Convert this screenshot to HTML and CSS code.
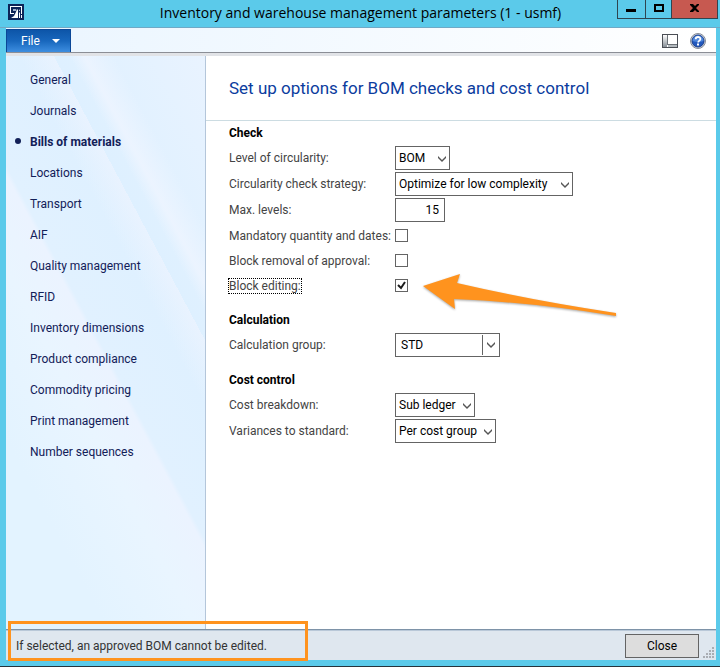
FILE: index.html
```html
<!DOCTYPE html>
<html lang="en">
<head>
    <meta charset="UTF-8">
    <meta name="viewport" content="width=device-width, initial-scale=1.0">
    <title>Inventory and warehouse management parameters (1 - usmf)</title>
    <link rel="stylesheet" href="styles.css">
</head>
<body>
    <div class="window">
        <header class="title-bar">
            <svg class="app-icon" width="16" height="16" viewBox="0 0 16 16" aria-hidden="true">
                <rect width="16" height="16" fill="#0d2457"/>
                <path d="M2 2h12v8h-1V3H3v6h3v1H2z" fill="#fff"/>
                <path d="M3 14l3-2 2-4 1-3 1 1v8zM11 7l1-2v2zM11 9l1-1v6h-1zM13 11h1v3h-1z" fill="#fff"/>
                <path d="M5 5h3v2H5z" fill="#9fb0cc"/>
            </svg>
            <div class="window-title">Inventory and warehouse management parameters (1 - usmf)</div>
            <div class="window-buttons">
                <button class="win-button" aria-label="Minimize">
                    <svg width="27" height="18" viewBox="0 0 27 18"><path d="M8 9h10v3H8z"/></svg>
                </button>
                <button class="win-button" aria-label="Maximize">
                    <svg width="25" height="18" viewBox="0 0 25 18"><path d="M8 4h10v8H8zM10 6v4h6V6z" fill-rule="evenodd"/></svg>
                </button>
                <button class="win-button win-close" aria-label="Close window">
                    <svg width="45" height="18" viewBox="0 0 45 18"><path d="M18 4h3l2 2 2-2h2v1l-3 3 3 3v1h-2l-2-2-2 2h-3v-1l3-3-3-3z"/></svg>
                </button>
            </div>
        </header>

        <div class="frame">
            <div class="toolbar">
                <button class="file-button">File
                    <svg width="8" height="4" viewBox="0 0 8 4"><path d="M0 0h8L4 4z" fill="#fff"/></svg>
                </button>
                <div class="toolbar-icons">
                    <button class="icon-button" aria-label="View">
                        <svg width="16" height="14" viewBox="0 0 16 14">
                            <defs>
                                <linearGradient id="pane" x1="0" y1="0" x2="0" y2="1">
                                    <stop offset="0" stop-color="#fff"/>
                                    <stop offset="1" stop-color="#868e96"/>
                                </linearGradient>
                            </defs>
                            <rect x="0.5" y="0.5" width="15" height="13" fill="#fff" stroke="#4a4e55"/>
                            <rect x="1" y="1" width="4" height="12" fill="url(#pane)"/>
                            <rect x="6" y="11" width="9" height="2" fill="#b4babf"/>
                            <path d="M5.500 1v10M5 10.500h10" stroke="#6c7278"/>
                        </svg>
                    </button>
                    <button class="icon-button" aria-label="Help">
                        <svg width="16" height="16" viewBox="0 0 16 16">
                            <circle cx="8" cy="8" r="7.500" fill="#d5d9df" stroke="#858c97"/>
                            <circle cx="8" cy="8" r="6" fill="#2258bd" stroke="#173c8c"/>
                            <path d="M2.500 8a5.500 5.500 0 0 1 11 0q-5 2-11 0z" fill="#4f87dc"/>
                            <path d="M5.700 6.300c0-3 4.700-3 4.700-.3 0 1.700-2.200 1.600-2.200 3.500" fill="none" stroke="#fff" stroke-width="1.800"/>
                            <rect x="7" y="10.500" width="2" height="2" fill="#fff"/>
                        </svg>
                    </button>
                </div>
            </div>

            <div class="main">
                <nav class="sidebar">
                    <a href="#">General</a>
                    <a href="#">Journals</a>
                    <a href="#" class="active">Bills of materials</a>
                    <a href="#">Locations</a>
                    <a href="#">Transport</a>
                    <a href="#">AIF</a>
                    <a href="#">Quality management</a>
                    <a href="#">RFID</a>
                    <a href="#">Inventory dimensions</a>
                    <a href="#">Product compliance</a>
                    <a href="#">Commodity pricing</a>
                    <a href="#">Print management</a>
                    <a href="#">Number sequences</a>
                </nav>

                <div class="content">
                    <h1>Set up options for BOM checks and cost control</h1>

                    <form class="options">
                        <section class="group">
                            <h2>Check</h2>
                            <div class="row">
                                <label for="circularity">Level of circularity:</label>
                                <div class="select-box w-bom">
                                    <select id="circularity"><option>BOM</option></select>
                                    <svg class="chevron" width="8" height="6" viewBox="0 0 8 6"><path d="M0 0l4 4 4-4v2L4 6 0 2z"/></svg>
                                </div>
                            </div>
                            <div class="row">
                                <label for="strategy">Circularity check strategy:</label>
                                <div class="select-box w-strategy">
                                    <select id="strategy"><option>Optimize for low complexity</option></select>
                                    <svg class="chevron" width="8" height="6" viewBox="0 0 8 6"><path d="M0 0l4 4 4-4v2L4 6 0 2z"/></svg>
                                </div>
                            </div>
                            <div class="row">
                                <label for="levels">Max. levels:</label>
                                <input type="text" id="levels" class="number-input" value="15">
                            </div>
                            <div class="row check-row">
                                <label for="mandatory">Mandatory quantity and dates:</label>
                                <input type="checkbox" id="mandatory">
                            </div>
                            <div class="row check-row">
                                <label for="removal">Block removal of approval:</label>
                                <input type="checkbox" id="removal">
                            </div>
                            <div class="row check-row">
                                <label for="editing" class="focused">Block editing:</label>
                                <div class="check-box">
                                    <input type="checkbox" id="editing" checked>
                                    <svg class="tick" width="13" height="13" viewBox="0 0 13 13"><path d="M3 6l3 3 4-6"/></svg>
                                    <svg class="arrow" width="200" height="50" viewBox="0 0 200 50" aria-hidden="true">
                                        <path d="M3 17L40 5l-3 9Q110 31 196 44v3Q110 33 34 30l1 10z"/>
                                    </svg>
                                </div>
                            </div>
                        </section>

                        <section class="group">
                            <h2>Calculation</h2>
                            <div class="row">
                                <label for="calc-group">Calculation group:</label>
                                <div class="combo">
                                    <input type="text" id="calc-group" value="STD">
                                    <button type="button" aria-label="Open list">
                                        <svg class="combo-chevron" width="8" height="6" viewBox="0 0 8 6"><path d="M0 0l4 4 4-4v2L4 6 0 2z"/></svg>
                                    </button>
                                </div>
                            </div>
                        </section>

                        <section class="group">
                            <h2>Cost control</h2>
                            <div class="row">
                                <label for="breakdown">Cost breakdown:</label>
                                <div class="select-box w-breakdown">
                                    <select id="breakdown"><option>Sub ledger</option></select>
                                    <svg class="chevron" width="8" height="6" viewBox="0 0 8 6"><path d="M0 0l4 4 4-4v2L4 6 0 2z"/></svg>
                                </div>
                            </div>
                            <div class="row">
                                <label for="variances">Variances to standard:</label>
                                <div class="select-box w-variances">
                                    <select id="variances"><option>Per cost group</option></select>
                                    <svg class="chevron" width="8" height="6" viewBox="0 0 8 6"><path d="M0 0l4 4 4-4v2L4 6 0 2z"/></svg>
                                </div>
                            </div>
                        </section>
                    </form>
                </div>
            </div>

            <footer class="status-bar">
                <span class="status-text">If selected, an approved BOM cannot be edited.</span>
                <button class="close-button">Close</button>
                <svg class="grip" width="11" height="11" viewBox="0 0 11 11" aria-hidden="true">
                    <path d="M9 0h2v2H9zM6 3h2v2H6zM9 3h2v2H9zM3 6h2v2H3zM6 6h2v2H6zM9 6h2v2H9zM0 9h2v2H0zM3 9h2v2H3zM6 9h2v2H6zM9 9h2v2H9z" fill="#a9adb3"/>
                </svg>
                <div class="highlight"></div>
            </footer>
        </div>
    </div>
</body>
</html>
```

FILE: styles.css
```css
* {
    box-sizing: border-box;
}

body {
    margin: 0;
    font-family: Roboto, "Noto Sans", sans-serif;
    font-size: 12px;
    line-height: 16px;
    color: #000;
}

button,
input,
select {
    font: inherit;
    color: inherit;
    border-radius: 0;
    margin: 0;
    padding: 0;
}

svg {
    display: block;
}

.window {
    display: flex;
    flex-direction: column;
    min-height: 100vh;
    background: #5bcaea;
    border-bottom: 1px solid #26333c;
}

/* title bar */
.title-bar {
    display: flex;
    height: 28px;
    padding: 0 2px 0 8px;
    border-bottom: 1px solid #6fa9c6;
}

.app-icon {
    margin-top: 4px;
}

.window-title {
    flex: 1;
    padding-left: 80px;
    font-family: "Open Sans", "Noto Sans", sans-serif;
    font-size: 14px;
    line-height: 26px;
    text-align: center;
    white-space: nowrap;
}

.window-buttons {
    display: flex;
    height: 19px;
    border: 1px solid #2f4550;
    border-top: 0;
}

.win-button {
    border: 0;
    background: none;
}

.win-button + .win-button {
    border-left: 1px solid #2f4550;
}

.win-button.win-close {
    background: #c75950;
}

.frame {
    flex: 1;
    display: flex;
    flex-direction: column;
    margin: 0 4px 6px 6px;
    background: #fff;
}

/* toolbar */
.toolbar {
    display: flex;
    justify-content: space-between;
    height: 28px;
    background: linear-gradient(to right, #eaf5ff, #fff);
    border-bottom: 3px solid #e1e3e7;
    box-shadow: inset 0 -1px 0 #8b8e96;
}

.file-button {
    display: flex;
    align-items: center;
    gap: 12px;
    width: 65px;
    height: 23px;
    margin-top: 1px;
    padding: 0 0 0 14px;
    border: 1px solid #0a4797;
    border-bottom: 0;
    background: linear-gradient(#0d55a8, #1867bd 50%, #3d8ee0);
    color: #fff;
}

.toolbar-icons {
    display: flex;
    align-items: center;
    gap: 12px;
    padding-right: 10px;
}

.icon-button {
    border: 0;
    background: none;
}

.main {
    flex: 1;
    display: flex;
}

/* left navigation */
.sidebar {
    width: 200px;
    padding-top: 9px;
    border-right: 1px solid #b4c6da;
    background:
        linear-gradient(62deg, transparent 63%, rgba(240, 244, 254, 0.6) 70%, transparent 70%),
        linear-gradient(62deg, transparent 73%, rgba(243, 246, 255, 0.6) 76%, transparent 82%),
        linear-gradient(62deg, #e3f3ff 20%, #e9f5ff 38%, #ebf3ff 48%, #e1f1ff 49%, #def0ff 70%, #e9f3ff);
}

.sidebar a {
    position: relative;
    display: block;
    padding-left: 24px;
    line-height: 31px;
    color: #122058;
    text-decoration: none;
}

.sidebar .active {
    font-weight: bold;
}

.sidebar .active::before {
    content: "";
    position: absolute;
    left: 9px;
    top: 11px;
    width: 6px;
    height: 6px;
    border-radius: 50%;
    background: #122058;
}

/* content */
.content {
    flex: 1;
    min-width: 0;
}

h1 {
    margin: 0;
    padding-left: 23px;
    border-bottom: 1px solid #ccdce2;
    font-size: 17px;
    font-weight: normal;
    line-height: 64px;
    color: #0b3c9e;
}

.options {
    padding: 2px 23px;
}

.group {
    display: flex;
    flex-direction: column;
    gap: 2px;
    margin-bottom: 13px;
}

h2 {
    margin: 0 0 1px;
    font-size: 12px;
    line-height: 20px;
}

.row {
    display: grid;
    grid-template-columns: 166px 1fr;
    align-items: center;
    justify-items: start;
    height: 24px;
    color: #444;
    white-space: nowrap;
}

.check-row {
    height: 23px;
}

.select-box {
    position: relative;
}

select,
.number-input,
.combo {
    width: 100%;
    height: 24px;
    border: 1px solid #646464;
    background: #fff;
    color: #000;
}

select {
    appearance: none;
    padding: 0 16px 0 3px;
}

.w-bom {
    width: 55px;
}

.w-strategy {
    width: 178px;
}

.w-breakdown {
    width: 80px;
}

.w-variances {
    width: 101px;
}

.chevron {
    position: absolute;
    right: 4px;
    top: 10px;
    pointer-events: none;
}

.chevron path,
.combo-chevron path {
    fill: #555;
}

.number-input {
    width: 50px;
    padding-right: 5px;
    text-align: right;
}

.combo {
    display: flex;
    width: 105px;
}

.combo input {
    flex: 1;
    min-width: 0;
    padding-left: 5px;
    border: 0;
}

.combo button {
    width: 17px;
    margin: 1px 0;
    padding-left: 4px;
    border: 0;
    border-left: 1px solid #646464;
    background: none;
}

input[type="checkbox"] {
    appearance: none;
    display: block;
    width: 13px;
    height: 13px;
    border: 1px solid #646464;
    background: #fff;
}

.check-box {
    position: relative;
}

.tick {
    position: absolute;
    left: 0;
    top: 0;
    pointer-events: none;
}

.tick path {
    fill: none;
    stroke: #1c1c1c;
    stroke-width: 2;
}

.focused {
    line-height: 14px;
    outline: 1px dotted #000;
}

.arrow {
    position: absolute;
    left: 25px;
    top: -10px;
    overflow: visible;
    pointer-events: none;
    filter: drop-shadow(0 1px 1px rgba(0, 0, 0, 0.35));
}

.arrow path {
    fill: #ff931e;
}

/* status bar */
.status-bar {
    position: relative;
    display: flex;
    align-items: center;
    height: 31px;
    padding: 2px 2px 0 10px;
    border-top: 1px solid #7e93a8;
    background: #dfe7ef;
    box-shadow: inset 0 1px 0 #b9c8d8;
    color: #333;
}

.status-text {
    flex: 1;
}

.close-button {
    width: 74px;
    height: 24px;
    margin-right: 4px;
    border: 1px solid #646464;
    background: #ddd;
    color: #000;
}

.grip {
    align-self: flex-end;
    margin-bottom: 2px;
}

.highlight {
    position: absolute;
    left: 2px;
    top: -9px;
    width: 300px;
    height: 40px;
    border: 3px solid #ff931e;
    pointer-events: none;
}
```
